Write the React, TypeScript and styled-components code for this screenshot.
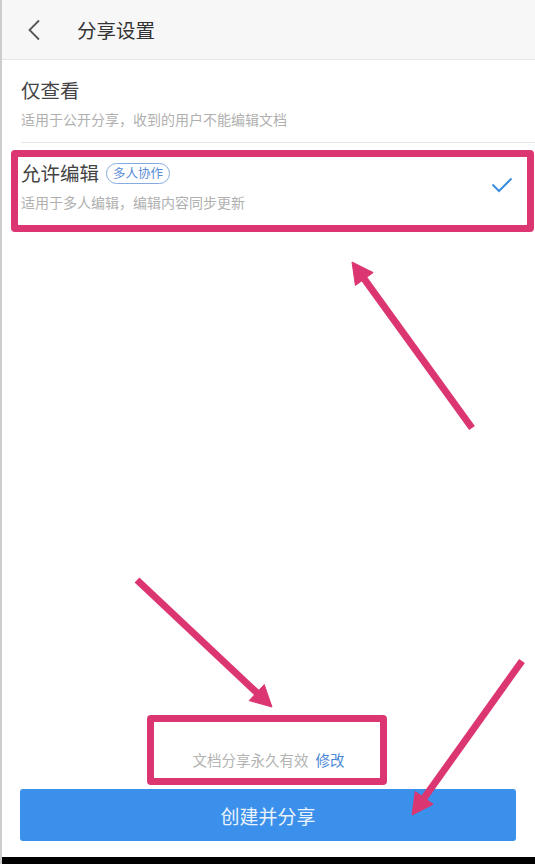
import React from 'react';
import styled, { createGlobalStyle } from 'styled-components';

const PINK = '#db3672';
const BLUE = '#3a90ea';

const GlobalStyle = createGlobalStyle`
    html, body {
        margin: 0;
        padding: 0;
        background: #fff;
    }
    body {
        font-family: 'Noto Sans CJK SC', 'Noto Sans', sans-serif;
    }
`;

const Page = styled.div`
    position: relative;
    display: flex;
    flex-direction: column;
    height: 864px;
    overflow: hidden;
    background: #fff;
    border-left: 2px solid #cdcdcd;
    box-sizing: border-box;
`;

const Header = styled.header`
    display: flex;
    align-items: center;
    height: 59px;
    background: #f7f7f7;
    border-bottom: 1px solid #e6e6e6;
    padding-left: 25px;
`;

const BackButton = styled.button`
    display: flex;
    align-items: center;
    padding: 0;
    border: 0;
    background: none;
    width: 50px;
    height: 30px;
`;

const HeaderTitle = styled.h1`
    margin: 0;
    font-size: 19.5px;
    font-weight: 400;
    color: #333;
    line-height: 24px;
`;

const List = styled.div`
    display: flex;
    flex-direction: column;
`;

const Row = styled.div<{ $divider?: boolean }>`
    position: relative;
    display: flex;
    align-items: flex-start;
    margin-left: 19px;
    padding: 18px 20px 13px 0;
    border-bottom: ${(p) => (p.$divider ? '1px solid #e8e8e8' : '0')};
`;

const RowText = styled.div`
    flex: 1;
    display: flex;
    flex-direction: column;
    gap: 7px;
`;

const RowTitle = styled.div`
    display: flex;
    align-items: center;
    font-size: 19.5px;
    line-height: 24px;
    color: #444;
`;

const Badge = styled.span`
    display: inline-flex;
    align-items: center;
    height: 19px;
    margin-left: 7px;
    padding: 0 6px;
    border: 1px solid #86abe0;
    border-radius: 11px;
    font-size: 12.5px;
    color: #5a8bd6;
`;

const RowDesc = styled.div`
    font-size: 14px;
    line-height: 20px;
    color: #b0b0b0;
`;

const Check = styled.svg`
    width: 22px;
    height: 16px;
    margin-right: 2px;
    margin-top: 16px;
`;

const Frame = styled.div<{ $top: number; $left: string; $width: string; $height: number }>`
    position: absolute;
    top: ${(p) => p.$top}px;
    left: ${(p) => p.$left};
    width: ${(p) => p.$width};
    height: ${(p) => p.$height}px;
    border: 7px solid ${PINK};
    border-radius: 4px;
    box-sizing: border-box;
    pointer-events: none;
`;

const Spacer = styled.div`
    flex: 1;
`;

const Note = styled.div`
    position: relative;
    align-self: center;
    font-size: 14.5px;
    line-height: 20px;
    color: #b3b3b3;
    margin-bottom: 19px;
`;

const NoteLink = styled.span`
    margin-left: 7px;
    color: #4a88d8;
`;

const PrimaryButton = styled.button`
    margin: 0 19px 0 18px;
    height: 52px;
    border: 0;
    border-radius: 3px;
    background: ${BLUE};
    color: #eaf3fd;
    font-family: 'Noto Sans CJK SC', sans-serif;
    font-size: 19px;
`;

const BottomGap = styled.div`
    height: 16px;
`;

const NavBar = styled.div`
    height: 7px;
    background: #000;
    margin-left: -2px;
`;

const Overlay = styled.svg`
    position: absolute;
    top: 0;
    left: -2px;
    width: 535px;
    height: 864px;
    pointer-events: none;
`;

type Pt = [number, number];

const Arrow: React.FC<{ from: Pt; to: Pt }> = ({ from, to }) => {
    const dx = to[0] - from[0];
    const dy = to[1] - from[1];
    const len = Math.hypot(dx, dy);
    const ux = dx / len;
    const uy = dy / len;
    const nx = -uy;
    const ny = ux;
    const head = 21;
    const half = 11;
    const bx = to[0] - ux * head;
    const by = to[1] - uy * head;
    const ex = to[0] - ux * (head - 3);
    const ey = to[1] - uy * (head - 3);
    const pts = [
        `${to[0]},${to[1]}`,
        `${bx + nx * half},${by + ny * half}`,
        `${bx - nx * half},${by - ny * half}`,
    ].join(' ');

    return (
        <g fill={PINK} stroke={PINK}>
            <line x1={from[0]} y1={from[1]} x2={ex} y2={ey} strokeWidth={7} />
            <polygon points={pts} strokeWidth={1} strokeLinejoin="round" />
        </g>
    );
};

const App: React.FC = () => {
    return (
        <Page>
            <GlobalStyle />
            <Header>
                <BackButton>
                    <svg width="14" height="22" viewBox="0 0 14 22">
                        <path
                            d="M12 1.5 L2.5 11 L12 20.5"
                            fill="none"
                            stroke="#555"
                            strokeWidth="1.8"
                        />
                    </svg>
                </BackButton>
                <HeaderTitle>分享设置</HeaderTitle>
            </Header>
            <List>
                <Row $divider>
                    <RowText>
                        <RowTitle>仅查看</RowTitle>
                        <RowDesc>适用于公开分享，收到的用户不能编辑文档</RowDesc>
                    </RowText>
                </Row>
                <Row>
                    <RowText>
                        <RowTitle>
                            允许编辑
                            <Badge>多人协作</Badge>
                        </RowTitle>
                        <RowDesc>适用于多人编辑，编辑内容同步更新</RowDesc>
                    </RowText>
                    <Check viewBox="0 0 22 16">
                        <path
                            d="M1.5 7.5 L8 14 L20.5 1.5"
                            fill="none"
                            stroke="#3d8ee0"
                            strokeWidth="2"
                        />
                    </Check>
                    <Frame $top={7} $left="-10px" $width="calc(100% + 9px)" $height={82} />
                </Row>
            </List>
            <Spacer />
            <Note>
                文档分享永久有效<NoteLink>修改</NoteLink>
                <Frame $top={-35} $left="-46px" $width="240px" $height={70} />
            </Note>
            <PrimaryButton>创建并分享</PrimaryButton>
            <BottomGap />
            <NavBar />
            <Overlay viewBox="0 0 535 864">
                <Arrow from={[472, 428]} to={[352, 262]} />
                <Arrow from={[137, 580]} to={[272, 707]} />
                <Arrow from={[522, 661]} to={[412, 815]} />
            </Overlay>
        </Page>
    );
};

export default App;
